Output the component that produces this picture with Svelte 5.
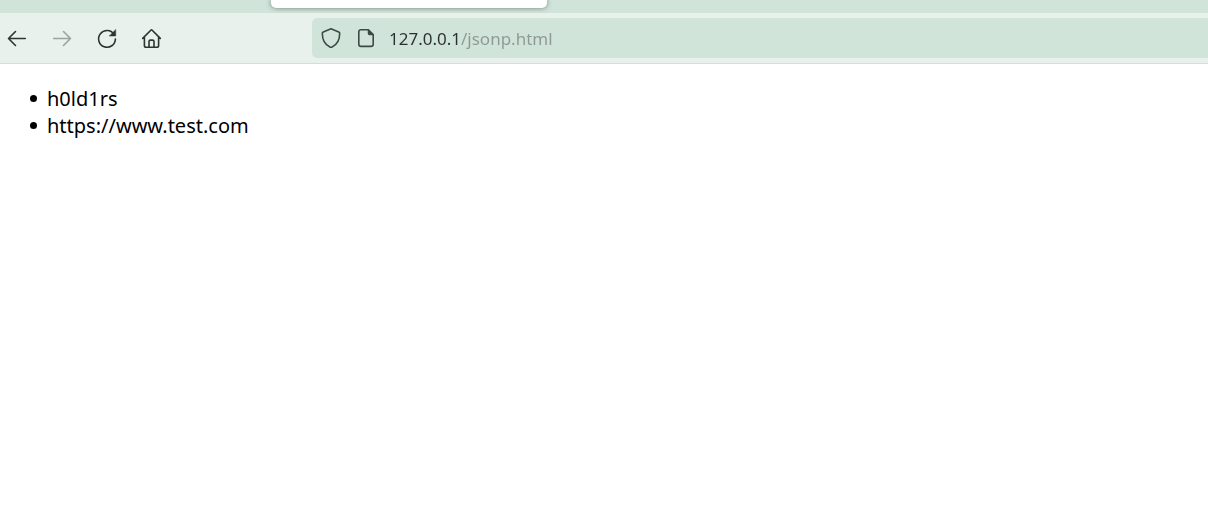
<script>
  let address = $state('127.0.0.1/jsonp.html');
  const items = ['h0ld1rs', 'https://www.test.com'];
</script>

<div class="browser">
  <div class="tabs"><div class="tab"></div></div>
  <nav class="toolbar" aria-label="Navigation">
    <div class="buttons">
      <button type="button" aria-label="Back">
        <svg viewBox="0 0 24 24"><path d="M20.3 12.5H3.5M10.5 5.5L3.5 12.5l7 7" /></svg>
      </button>
      <button type="button" aria-label="Forward" disabled>
        <svg viewBox="0 0 24 24"><path d="M3.7 12.5h16.8M13.5 5.5l7 7-7 7" /></svg>
      </button>
      <button type="button" aria-label="Reload">
        <svg viewBox="0 0 24 24">
          <path d="M19 8.2A8.4 8.4 0 1 0 20.4 13" />
          <path class="solid" d="M20.7 3.8v6.2h-6.2z" />
        </svg>
      </button>
      <button type="button" aria-label="Home">
        <svg viewBox="0 0 24 24">
          <path d="M2.7 12.4L10.8 4.2q.7-.7 1.4 0l8.1 8.2M4.4 10.9v8.5q0 1.8 1.8 1.8h10.6q1.8 0 1.8-1.8v-8.5M9 21v-5.4q0-1.5 1.5-1.5h2q1.5 0 1.5 1.5V21" />
        </svg>
      </button>
    </div>
    <div class="address">
      <svg viewBox="0 0 24 24" aria-hidden="true">
        <path d="M12 2.8L4.3 5.9q-1 .4-1 1.4c0 6.3 2.6 11.4 7.6 13.7q1.1.5 2.2 0c5-2.3 7.6-7.4 7.6-13.7q0-1-1-1.4z" />
      </svg>
      <svg viewBox="0 0 24 24" aria-hidden="true">
        <path d="M14.4 3.8H7q-2.2 0-2.2 2.2v12.2q0 2.2 2.2 2.2h10q2.2 0 2.2-2.2V8.6z" />
        <path class="solid" d="M14 3.5v3.9q0 1.6 1.6 1.6h3.9z" />
      </svg>
      <input type="text" aria-label="Address" spellcheck="false" bind:value={address} />
    </div>
  </nav>
  <main>
    <ul>
      {#each items as item}
        <li>{item}</li>
      {/each}
    </ul>
  </main>
</div>

<style>
  :global(body) {
    margin: 0;
    background: #fff;
  }
  .browser {
    font-family: "Noto Sans", "Open Sans", sans-serif;
    color: #000;
  }
  .tabs {
    height: 13px;
    background: #d1e4da;
    overflow: hidden;
  }
  .tab {
    width: 276px;
    height: 8px;
    margin-left: 271px;
    background: #fff;
    border-radius: 0 0 5px 5px;
    box-shadow: 0 0 5px rgba(40, 60, 50, 0.6);
  }
  .toolbar {
    display: flex;
    align-items: center;
    gap: 143px;
    padding: 5px 0;
    background: #e8f1ec;
    border-bottom: 1px solid #d1e0d9;
  }
  .buttons {
    display: flex;
    gap: 11px;
  }
  button {
    display: grid;
    place-items: center;
    width: 34px;
    height: 40px;
    padding: 0;
    border: 0;
    background: none;
    color: #2d3431;
  }
  button:disabled {
    color: #9ba49f;
  }
  svg {
    display: block;
    flex: none;
    width: 24px;
    height: 24px;
    fill: none;
    stroke: currentColor;
    stroke-width: 1.6;
    stroke-linecap: round;
    stroke-linejoin: round;
  }
  .solid {
    fill: currentColor;
    stroke-width: 0.5;
  }
  .address {
    display: flex;
    flex: 1;
    align-items: center;
    gap: 11px;
    min-width: 0;
    height: 40px;
    padding-left: 7px;
    box-sizing: border-box;
    background: #d1e4da;
    border-radius: 5px 0 0 5px;
    color: #3d4a44;
  }
  input {
    flex: 1;
    min-width: 0;
    height: 40px;
    padding: 0;
    border: 0;
    outline: 0;
    font: 17px/24px "Noto Sans", "Open Sans", sans-serif;
    color: transparent;
    caret-color: #2b302e;
    background: linear-gradient(to right, #2b302e 72px, #8d9992 72px);
    background-clip: text;
    -webkit-background-clip: text;
  }
  main {
    padding: 21px 8px;
  }
  ul {
    margin: 0;
    padding-left: 22px;
    list-style: none;
    font-size: 20px;
    line-height: 27px;
  }
  li {
    display: flex;
    align-items: center;
    gap: 10px;
  }
  li::before {
    content: "";
    width: 7px;
    height: 7px;
    border-radius: 50%;
    background: #000;
  }
</style>
